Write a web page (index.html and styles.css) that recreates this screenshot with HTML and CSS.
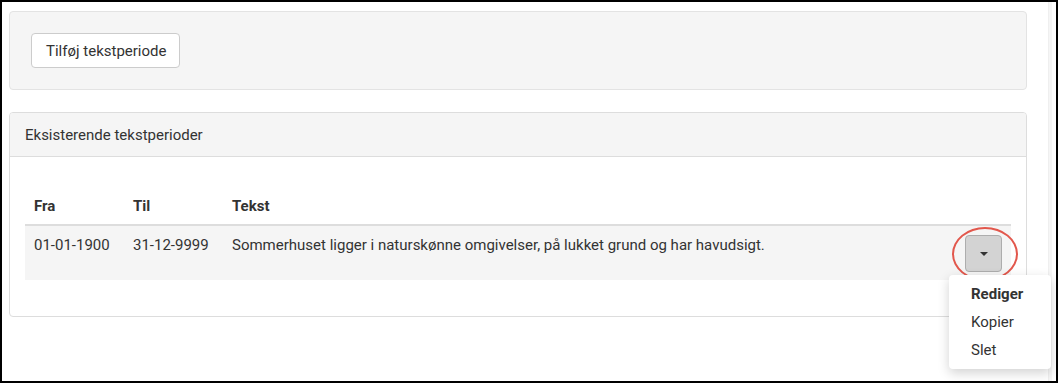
FILE: index.html
```html
<!doctype html>
<html>
  <head>
    <title>Tekstperioder</title>
    <link rel="stylesheet" href="styles.css">
  </head>
  <body>
    <div class="frame">
      <div class="content">
        <div class="well">
          <button class="btn" type="button">Tilføj tekstperiode</button>
        </div>

        <div class="panel">
          <div class="panel-heading">Eksisterende tekstperioder</div>
          <div class="panel-body">
            <table class="periods">
              <thead>
                <tr>
                  <th class="col-date">Fra</th>
                  <th class="col-date">Til</th>
                  <th>Tekst</th>
                  <th class="col-actions"></th>
                </tr>
              </thead>
              <tbody>
                <tr>
                  <td>01-01-1900</td>
                  <td>31-12-9999</td>
                  <td>Sommerhuset ligger i naturskønne omgivelser, på lukket grund og har havudsigt.</td>
                  <td class="col-actions">
                    <div class="btn-group">
                      <button class="btn-toggle" type="button"><span class="caret"></span></button>
                      <span class="highlight"></span>
                      <ul class="dropdown-menu">
                        <li class="default">Rediger</li>
                        <li>Kopier</li>
                        <li>Slet</li>
                      </ul>
                    </div>
                  </td>
                </tr>
              </tbody>
            </table>
          </div>
        </div>
      </div>
      <div class="scrollbar"></div>
    </div>
  </body>
</html>
```

FILE: styles.css
```css
* {
  box-sizing: border-box;
}

body {
  margin: 0;
  font-family: Roboto, "Liberation Sans", sans-serif;
  font-size: 15px;
  line-height: 20px;
  color: #333;
  background: #fff;
}

.frame {
  display: flex;
  width: 1058px;
  height: 383px;
  border: 2px solid #000;
  overflow: hidden;
}

.content {
  width: 1025px;
  padding: 9px 0 0 7px;
}

.scrollbar {
  width: 4px;
  margin-left: 21px;
  background: #f6f6f6;
  border-left: 1px solid #efefef;
}

.well {
  background: #f5f5f5;
  border: 1px solid #e3e3e3;
  border-radius: 4px;
  padding: 21px;
  margin-bottom: 22px;
}

.btn {
  font: inherit;
  color: #333;
  background: #fff;
  border: 1px solid #ccc;
  border-radius: 4px;
  padding: 7px 13px 7px 14px;
  height: 35px;
}

.panel {
  border: 1px solid #ddd;
  border-radius: 4px;
}

.panel-heading {
  background: #f5f5f5;
  border-bottom: 1px solid #ddd;
  border-radius: 3px 3px 0 0;
  padding: 12px 15px 11px;
}

.panel-body {
  padding: 31px 15px 36px;
}

.periods {
  width: 100%;
  border-collapse: collapse;
}

.periods th {
  text-align: left;
  font-weight: bold;
  padding: 8px 8px 8px 9px;
  border-bottom: 2px solid #ddd;
}

.periods td {
  vertical-align: top;
  padding: 9px 8px 8px 9px;
  background: #f5f5f5;
}

.col-date {
  width: 99px;
}

.col-actions {
  width: 60px;
}

.periods td.col-actions {
  padding: 9px 9px 8px 0;
  text-align: right;
}

.btn-group {
  position: relative;
  display: inline-block;
  width: 37px;
  height: 37px;
  text-align: left;
  vertical-align: top;
}

.btn-toggle {
  display: flex;
  align-items: center;
  justify-content: center;
  width: 37px;
  height: 37px;
  padding: 0;
  background: #d3d3d3;
  border: 1px solid #adadad;
  border-radius: 4px;
}

.caret {
  width: 0;
  height: 0;
  border-top: 4px solid #333;
  border-left: 4px solid transparent;
  border-right: 4px solid transparent;
}

.highlight {
  position: absolute;
  left: -13px;
  top: -8px;
  width: 66px;
  height: 54px;
  border: 2px solid #e2574c;
  border-radius: 50%;
}

.dropdown-menu {
  position: absolute;
  left: -16px;
  top: 40px;
  width: 102px;
  margin: 0;
  padding: 5px 0;
  list-style: none;
  background: #fff;
  border-radius: 4px;
  box-shadow: 0 4px 12px rgba(0, 0, 0, 0.18);
}

.dropdown-menu li {
  padding: 4px 22px;
  color: #333;
}

.dropdown-menu .default {
  font-weight: bold;
}
```
